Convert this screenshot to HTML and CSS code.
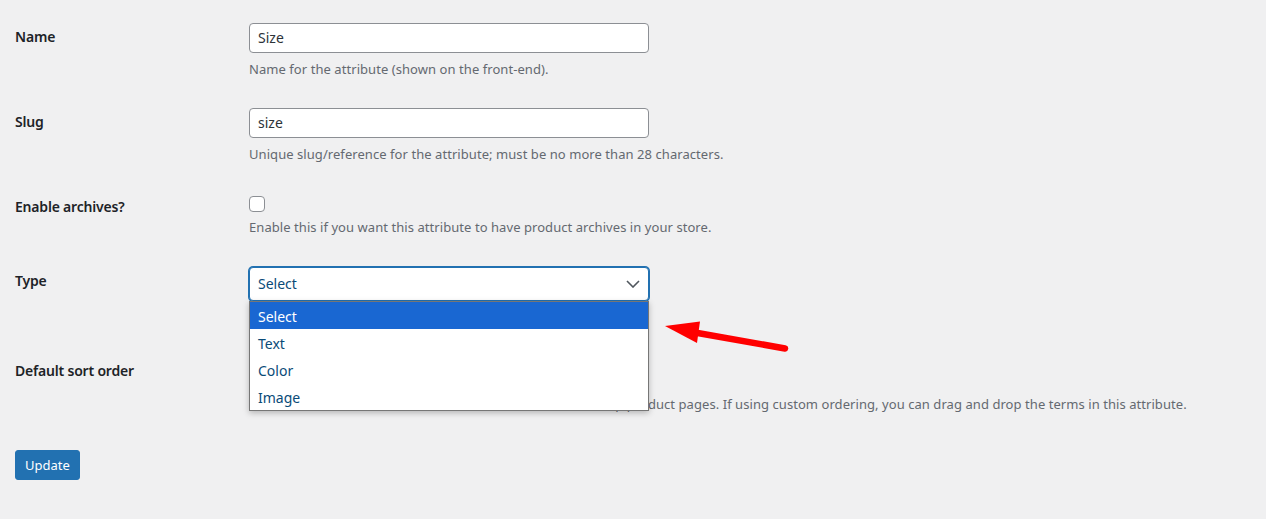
FILE: index.html
```html
<!DOCTYPE html>
<html lang="en">
<head>
<meta charset="utf-8">
<title>Edit attribute</title>
<link rel="stylesheet" href="styles.css">
</head>
<body>
<form class="form">
  <div class="row">
    <div class="label">Name</div>
    <div class="field">
      <div class="input">Size</div>
      <p class="desc">Name for the attribute (shown on the front-end).</p>
    </div>
  </div>
  <div class="row">
    <div class="label">Slug</div>
    <div class="field">
      <div class="input">size</div>
      <p class="desc">Unique slug/reference for the attribute; must be no more than 28 characters.</p>
    </div>
  </div>
  <div class="row">
    <div class="label">Enable archives?</div>
    <div class="field">
      <div class="checkbox"></div>
      <p class="desc desc-check">Enable this if you want this attribute to have product archives in your store.</p>
    </div>
  </div>
  <div class="row row-type">
    <div class="label">Type</div>
    <div class="field">
      <div class="select-wrap">
        <div class="select focused">
          <span>Select</span>
          <svg class="chev" width="14" height="8" viewBox="0 0 14 8"><polyline points="1,1 7,7 13,1" fill="none" stroke="#50575e" stroke-width="1.6"/></svg>
        </div>
        <ul class="dropdown">
          <li class="opt active">Select</li>
          <li class="opt">Text</li>
          <li class="opt">Color</li>
          <li class="opt">Image</li>
        </ul>
      </div>
    </div>
  </div>
  <div class="row row-sort">
    <div class="label">Default sort order</div>
    <div class="field">
      <div class="select"></div>
      <p class="desc desc-sort">Determines the sort order of the terms on the frontend shop product pages. If using custom ordering, you can drag and drop the terms in this attribute.</p>
    </div>
  </div>
  <button type="button" class="btn">Update</button>
</form>
<svg class="arrow" width="1266" height="519" viewBox="0 0 1266 519">
  <line x1="692" y1="332" x2="785" y2="348.5" stroke="#ff0000" stroke-width="6.5" stroke-linecap="round"/>
  <polygon points="665,326 700,321.5 697,343" fill="#ff0000"/>
</svg>
</body>
</html>
```

FILE: styles.css
```css
html, body {
  margin: 0;
  padding: 0;
  background: #f0f0f1;
}
body {
  font-family: "Noto Sans", "Open Sans", sans-serif;
  color: #1d2327;
  position: relative;
  width: 1266px;
  height: 519px;
  overflow: hidden;
}
.form {
  padding: 8px 0 0 15px;
}
.row {
  display: flex;
  padding: 15px 0;
}
.row-type {
  padding-top: 16px;
  padding-bottom: 39px;
}
.label {
  width: 234px;
  flex: none;
  padding-top: 4px;
  font-size: 14px;
  line-height: 20px;
  font-weight: 600;
  letter-spacing: -0.2px;
  color: #1d2327;
}
.row-sort .label {
  padding-top: 6px;
}
.field {
  width: 960px;
}
.input {
  box-sizing: border-box;
  width: 400px;
  height: 30px;
  border: 1px solid #8c8f94;
  border-radius: 4px;
  background: #fff;
  padding: 0 8px;
  font-size: 14px;
  line-height: 28px;
  color: #2c3338;
}
.desc {
  margin: 7px 0 0;
  font-size: 13px;
  line-height: 18px;
  letter-spacing: 0.06px;
  color: #646970;
}
.checkbox {
  box-sizing: border-box;
  width: 16px;
  height: 16px;
  margin-top: 3px;
  border: 1px solid #8c8f94;
  border-radius: 4px;
  background: #fff;
}
.desc-check {
  margin-top: 6px;
}
.desc-sort {
  margin-top: 10px;
}
.select-wrap {
  position: relative;
  width: 400px;
}
.select {
  box-sizing: border-box;
  width: 400px;
  height: 30px;
  border: 1px solid #8c8f94;
  border-radius: 4px;
  background: #fff;
  padding: 0 8px;
  font-size: 14px;
  line-height: 28px;
  color: #2c3338;
  display: flex;
  align-items: center;
  justify-content: space-between;
}
.select.focused {
  height: 34px;
  line-height: 32px;
  border-color: #2271b1;
  box-shadow: 0 0 0 1px #2271b1;
  color: #0a4b78;
}
.dropdown {
  position: absolute;
  left: 0;
  top: 34px;
  z-index: 5;
  box-sizing: border-box;
  width: 400px;
  margin: 0;
  padding: 0;
  list-style: none;
  background: #fff;
  border: 1px solid #767676;
  box-shadow: 0 2px 6px rgba(0, 0, 0, 0.25);
}
.opt {
  box-sizing: border-box;
  height: 27px;
  padding: 1px 0 0 8px;
  line-height: 27px;
  font-size: 14px;
  color: #0a4b78;
}
.opt.active {
  background: #1967d2;
  color: #fff;
}
.btn {
  margin-top: 22px;
  box-sizing: border-box;
  height: 30px;
  padding: 0 9px;
  border: 1px solid #2271b1;
  border-radius: 3px;
  background: #2271b1;
  color: #fff;
  font-family: "Noto Sans", "Open Sans", sans-serif;
  font-size: 13px;
  line-height: 28px;
}
.arrow {
  position: absolute;
  left: 0;
  top: 0;
  pointer-events: none;
  z-index: 10;
}
```
